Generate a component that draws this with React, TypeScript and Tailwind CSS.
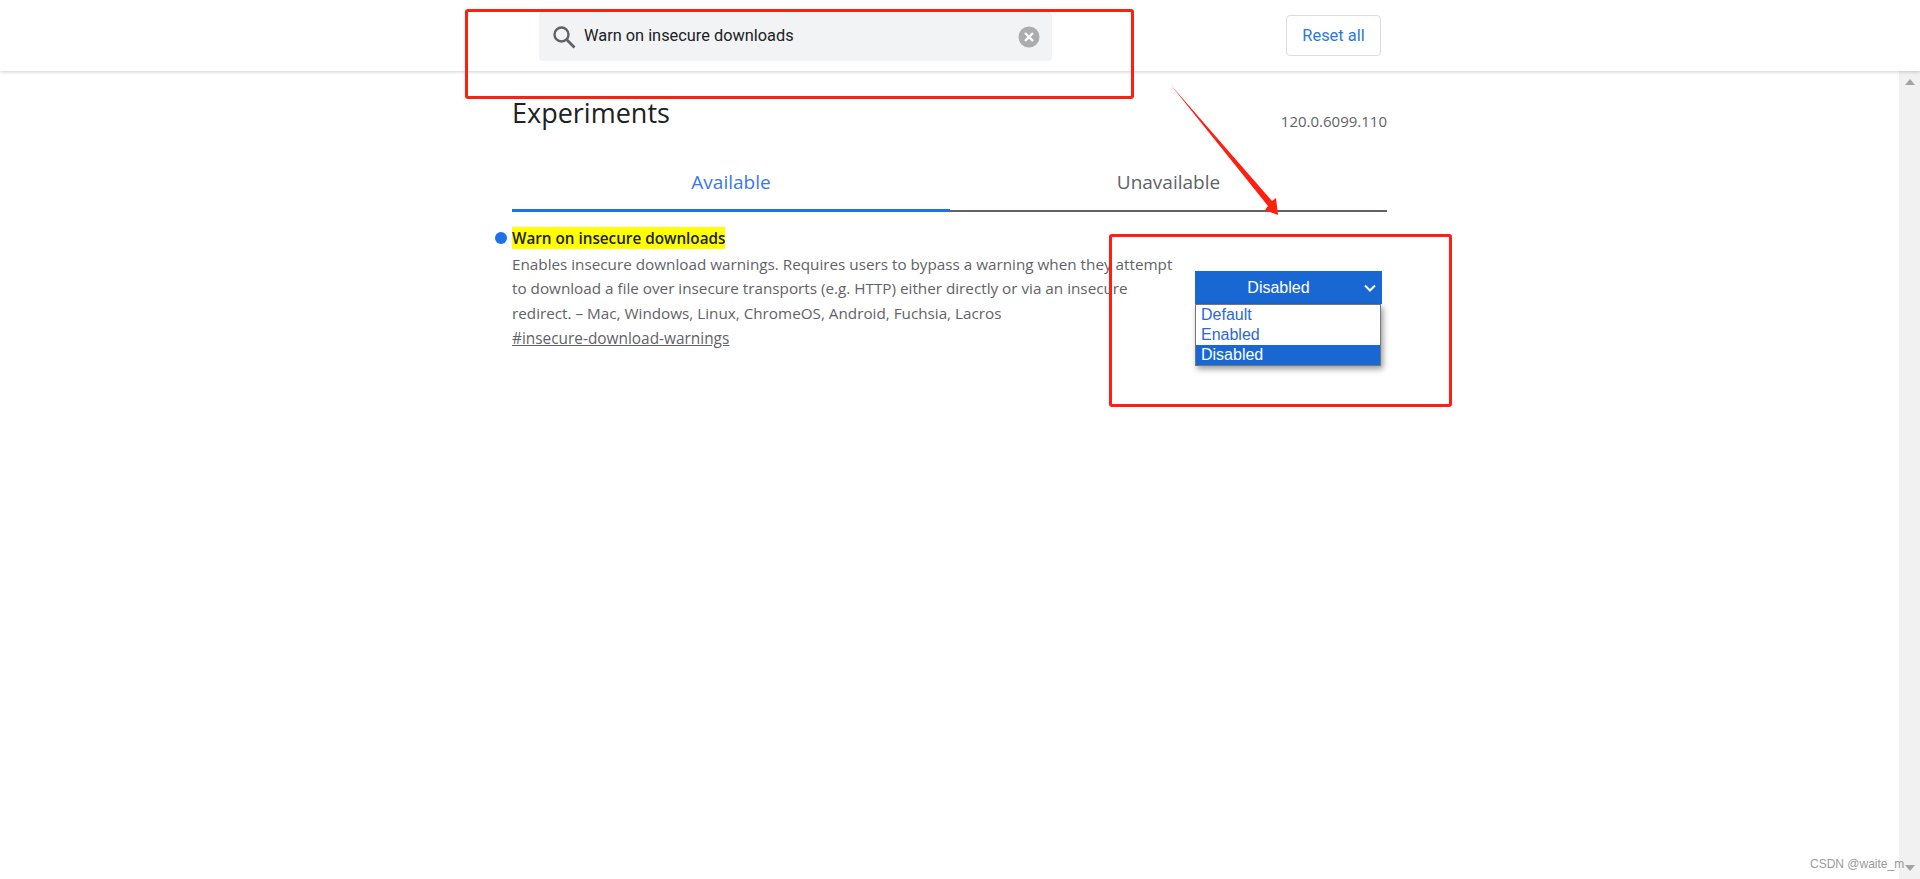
import React from "react";

const body = "font-['Open_Sans','Noto_Sans',sans-serif]";

export default function App() {
  return (
    <div className={`relative flex h-[879px] w-full flex-col overflow-hidden bg-white ${body}`}>
      <header className="z-10 flex h-[71px] shrink-0 items-start bg-white pl-[539px] shadow-[0_1px_3px_rgba(60,64,67,0.25)]">
        <div className="mt-3 flex h-[49px] w-[513px] items-center rounded-[4px] bg-[#f1f3f4] pl-[13px] pr-[12px] font-['Roboto',sans-serif]">
          <svg width="24" height="24" viewBox="0 0 24 24" className="shrink-0">
            <circle cx="9.5" cy="9.5" r="7" fill="none" stroke="#5f6368" strokeWidth="2.4" />
            <path d="M14.8 14.8 L22.5 22.5" stroke="#5f6368" strokeWidth="2.8" />
          </svg>
          <span className="ml-[8px] flex-1 text-[16.35px] text-[#202124]">Warn on insecure downloads</span>
          <svg width="22" height="22" viewBox="0 0 22 22">
            <circle cx="11" cy="11" r="10.5" fill="#aaacae" />
            <path d="M7 7 L15 15 M15 7 L7 15" stroke="#fff" strokeWidth="2.4" />
          </svg>
        </div>
        <button className="ml-[234px] mt-[15px] h-[41px] w-[95px] rounded-[4px] border border-[#dadce0] bg-white pt-[1px] text-center font-['Roboto',sans-serif] text-[16.4px] text-[#2a78e4]">
          Reset all
        </button>
      </header>

      <div className="flex flex-1">
        <main className="flex-1 pl-[512px]">
          <div className="w-[875px]">
            <div className="flex items-start justify-between pt-[21px]">
              <h1 className="text-[27px] leading-[42px] text-[#202124]">Experiments</h1>
              <span className="pt-[19px] text-[15px] leading-[20px] text-[#5f6368]">120.0.6099.110</span>
            </div>
            <div className="mt-[25px] flex">
              <div className="h-[53px] w-[438px] border-b-[3px] border-[#1a73e8] pt-[9px] text-center text-[19px] leading-[28px] text-[#3b78e7]">
                Available
              </div>
              <div className="h-[53px] flex-1 border-b-[2px] border-[#5f6368] pt-[9px] text-center text-[19px] leading-[28px] text-[#5f6368]">
                Unavailable
              </div>
            </div>
            <div className="relative mt-[14px] flex">
              <span className="absolute left-[-17px] top-[6px] h-[12px] w-[12px] rounded-full bg-[#1a73e8]" />
              <div className="w-[680px]">
                <div className="flex h-[23px] pt-[1px]">
                  <span className="bg-[#ffff00] text-[15.25px] font-semibold leading-[22px] text-[#202124]">
                    Warn on insecure downloads
                  </span>
                </div>
                <p className="mt-[3px] w-[670px] text-[15.25px] leading-[24.4px] text-[#5f6368]">
                  Enables insecure download warnings. Requires users to bypass a warning when they attempt to download a file over insecure transports (e.g. HTTP) either directly or via an insecure redirect. – Mac, Windows, Linux, ChromeOS, Android, Fuchsia, Lacros
                </p>
                <a className="mt-[2px] block text-[15.4px] leading-[24px] text-[#5f6368] underline">#insecure-download-warnings</a>
              </div>
              <div className="relative ml-[3px] mt-[45px] w-[187px]">
                <div className="relative flex h-[33px] items-center justify-center bg-[#1967d2] pr-[20px] font-['Liberation_Sans',sans-serif] text-[16px] text-white">
                  Disabled
                  <svg width="12" height="8" viewBox="0 0 12 8" className="absolute right-[6px] top-[13px]">
                    <path d="M1 1.5 L6 6.5 L11 1.5" fill="none" stroke="#fff" strokeWidth="2" />
                  </svg>
                </div>
                <ul className="absolute left-0 top-[33px] w-[186px] border border-[#767676] bg-white font-['Liberation_Sans',sans-serif] text-[16px] leading-[20px] text-[#2a68d8] shadow-[2px_3px_6px_rgba(0,0,0,0.4)]">
                  <li className="pl-[5px]">Default</li>
                  <li className="pl-[5px]">Enabled</li>
                  <li className="bg-[#1967d2] pl-[5px] text-white">Disabled</li>
                </ul>
              </div>
            </div>
          </div>
        </main>
        <aside className="flex w-[21px] shrink-0 flex-col items-center justify-between bg-[#f1f1f1] pb-[8px] pt-[8px]">
          <svg width="10" height="6" viewBox="0 0 10 6"><path d="M5 0 L10 6 L0 6 Z" fill="#a3a3a3" /></svg>
          <svg width="10" height="6" viewBox="0 0 10 6"><path d="M0 0 L10 0 L5 6 Z" fill="#a3a3a3" /></svg>
        </aside>
      </div>

      {/* annotations over the page */}
      <div className="absolute left-[465px] top-[9px] z-20 h-[90px] w-[669px] rounded-[3px] border-[3px] border-[#ff1f10]" />
      <div className="absolute left-[1109px] top-[234px] z-20 h-[173px] w-[343px] rounded-[3px] border-[3px] border-[#ff1f10]" />
      <svg className="absolute left-0 top-0 z-20" width="1920" height="879">
        <path d="M1170 84 L1272 201 L1276 198 L1278 215 L1265 210 L1268 206 Z" fill="#ff1f10" />
      </svg>
      <span className="absolute left-[1810px] top-[856px] z-20 font-['Liberation_Sans',sans-serif] text-[12px] leading-[16px] text-[#9a9a9a]">CSDN @waite_m</span>
    </div>
  );
}
